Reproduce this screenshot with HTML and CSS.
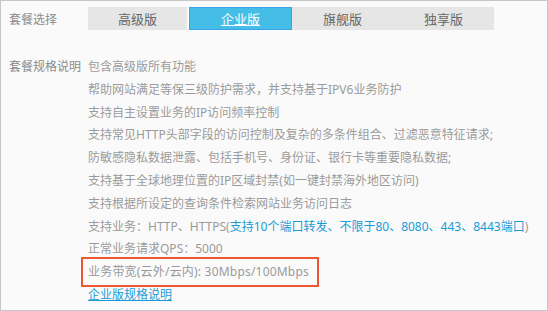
FILE: index.html
```html
<!DOCTYPE html>
<html lang="zh-CN">
<head>
<meta charset="utf-8">
<title>套餐选择</title>
<link rel="stylesheet" href="styles.css">
</head>
<body>
<div class="panel">
  <div class="row row-tabs">
    <div class="label">套餐选择</div>
    <div class="tabs">
      <div class="tab tab-first">高级版</div>
      <div class="tab tab-active"><span class="u">企业版</span></div>
      <div class="tab">旗舰版</div>
      <div class="tab">独享版</div>
    </div>
  </div>
  <div class="row row-spec">
    <div class="label">套餐规格说明</div>
    <ul class="lines">
      <li>包含高级版所有功能</li>
      <li>帮助网站满足等保三级防护需求，并支持基于IPV6业务防护</li>
      <li>支持自主设置业务的IP访问频率控制</li>
      <li>支持常见HTTP头部字段的访问控制及复杂的多条件组合、过滤恶意特征请求;</li>
      <li>防敏感隐私数据泄露、包括手机号、身份证、银行卡等重要隐私数据;</li>
      <li>支持基于全球地理位置的IP区域封禁(如一键封禁海外地区访问)</li>
      <li>支持根据所设定的查询条件检索网站业务访问日志</li>
      <li>支持业务：HTTP、HTTPS(<span class="blue">支持10个端口转发、不限于80、8080、443、8443端口</span>)</li>
      <li>正常业务请求QPS：5000</li>
      <li><span class="marked">业务带宽(云外/云内): 30Mbps/100Mbps</span></li>
      <li><a class="link" href="#">企业版规格说明</a></li>
    </ul>
  </div>
</div>
</body>
</html>
```

FILE: styles.css
```css
html, body {
  margin: 0;
  padding: 0;
  background: #ffffff;
}
body {
  font-family: "Noto Sans", "Noto Sans CJK SC", sans-serif;
  font-size: 12px;
}
.panel {
  width: 548px;
  height: 311px;
  box-sizing: border-box;
  border: 1px solid #c6c6c6;
  background: #fafafa;
  padding: 6px 0 0 8px;
}
.row {
  display: flex;
  align-items: flex-start;
}
.label {
  width: 79px;
  flex: none;
  color: #8a8a8a;
  white-space: nowrap;
}
.row-tabs {
  align-items: center;
  height: 23px;
}
.tabs {
  display: flex;
  height: 23px;
}
.tab {
  width: 101px;
  height: 23px;
  box-sizing: border-box;
  background: #e6e6e6;
  color: #666666;
  font-size: 13px;
  display: flex;
  align-items: center;
  justify-content: center;
}
.tab-first {
  width: 99px;
  margin-right: 2px;
}
.tab-active {
  width: 103px;
  background: #44bee6;
  border: 1px solid #3aa2e8;
  color: #ffffff;
}
.tab-active .u {
  text-decoration: underline;
}
.row-spec {
  margin-top: 26px;
  line-height: 22.8px;
}
.lines {
  list-style: none;
  margin: 0;
  padding: 0;
  color: #9a9a9a;
  white-space: nowrap;
}
.blue {
  color: #1a9ad6;
}
.marked {
  position: relative;
  display: inline-block;
  letter-spacing: 0.2px;
}
.marked::after {
  content: "";
  position: absolute;
  left: -7px;
  right: -10px;
  top: -4px;
  bottom: -3px;
  border: 2px solid #ef5634;
}
.link {
  color: #1a9ad6;
  text-decoration: underline;
}
```
